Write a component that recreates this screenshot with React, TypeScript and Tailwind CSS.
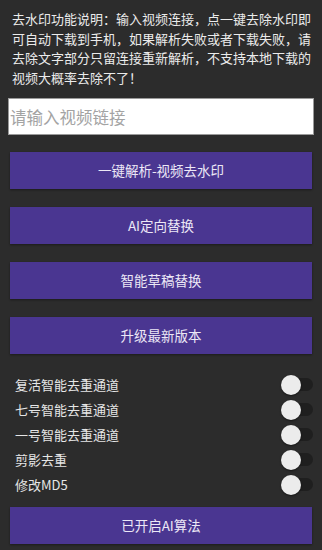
import { useState } from 'react'

const FONT = { fontFamily: '"Noto Sans CJK SC", "Noto Sans", sans-serif' }

const buttons = ['一键解析-视频去水印', 'AI定向替换', '智能草稿替换', '升级最新版本']
const toggles = ['复活智能去重通道', '七号智能去重通道', '一号智能去重通道', '剪影去重', '修改MD5']

function ActionButton({ label }: { label: string }) {
  return (
    <button className="mx-[10px] h-[37px] bg-[#4a3691] text-[13.5px] text-[#ece8f6] shadow-[0_1px_2px_rgba(0,0,0,0.4)]">
      {label}
    </button>
  )
}

function Toggle({ on, onChange }: { on: boolean; onChange: () => void }) {
  return (
    <button onClick={onChange} className="relative flex h-[20px] w-[32px] items-center">
      <span className="absolute right-0 h-[13px] w-[24px] rounded-full bg-[#1f1f1f]" />
      <span className={`absolute left-0 h-[20px] w-[20px] rounded-full bg-[#ececec] shadow-[0_1px_2px_rgba(0,0,0,0.5)] ${on ? 'translate-x-[12px]' : ''}`} />
    </button>
  )
}

export default function App() {
  const [url, setUrl] = useState('')
  const [flags, setFlags] = useState(toggles.map(() => false))

  return (
    <div className="flex h-[550px] w-[322px] flex-col bg-[#2c2c2c] pt-[9px]" style={FONT}>
      <p className="pl-[12px] pr-[10px] text-[13px] leading-[19.5px] text-[#ebebeb]">
        去水印功能说明：输入视频连接，点一键去除水印即可自动下载到手机，如果解析失败或者下载失败，请去除文字部分只留连接重新解析，不支持本地下载的视频大概率去除不了！
      </p>

      <input
        value={url}
        onChange={e => setUrl(e.target.value)}
        placeholder="请输入视频链接"
        className="mx-[8px] mt-[11px] h-[37px] border border-[#9a9a9a] bg-white px-[1px] text-[16.5px] text-[#333] outline-none placeholder:text-[#a3a3a3]"
      />

      <div className="mt-[17px] flex flex-col gap-[18px]">
        {buttons.map(b => (
          <ActionButton key={b} label={b} />
        ))}
      </div>

      <div className="mt-[18px] flex flex-col">
        {toggles.map((t, i) => (
          <div key={t} className="flex h-[25px] items-center justify-between pl-[15px] pr-[9px]">
            <span className="text-[13px] text-[#e6e6e6]">{t}</span>
            <Toggle on={flags[i]} onChange={() => setFlags(f => f.map((v, j) => (j === i ? !v : v)))} />
          </div>
        ))}
      </div>

      <div className="mt-[10px] flex flex-col">
        <ActionButton label="已开启AI算法" />
      </div>
    </div>
  )
}
